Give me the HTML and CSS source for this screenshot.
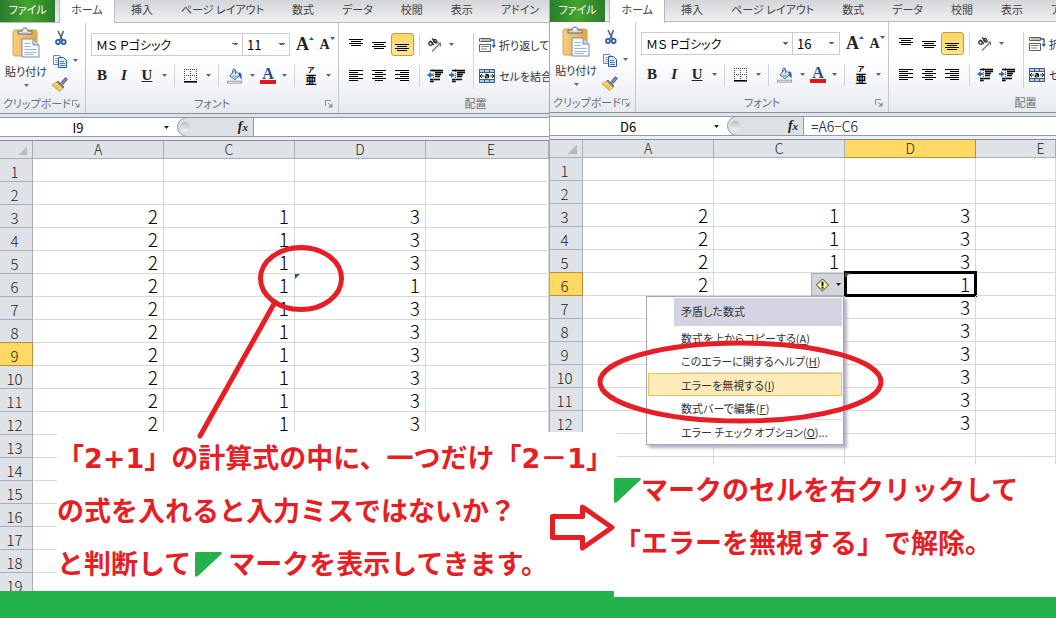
FILE: index.html
```html
<!DOCTYPE html>
<html lang="ja">
<head>
<meta charset="utf-8">
<title>エラーを無視する</title>
<link rel="stylesheet" href="styles.css">
</head>
<body>
<svg class="sprite" aria-hidden="true">
  <defs>
    <linearGradient id="gold" x1="0" y1="0" x2="1" y2="0"><stop offset="0" stop-color="#f6cf7e"/><stop offset="1" stop-color="#e5a545"/></linearGradient>
  </defs>
  <symbol id="paste" viewBox="0 0 28 31">
    <rect x="1" y="3" width="24" height="26" rx="2" fill="url(#gold)" stroke="#d9a04a"/>
    <path d="M6 7V4h4c0-4 6-4 6 0h4v3z" fill="#d5d9de" stroke="#666d75"/><circle cx="13" cy="3.500" r="1.300" fill="#fff"/>
    <path d="M10 12h11l6 6v12H10z" fill="#f8fafd" stroke="#7d8ea8"/><path d="M21 12v6h6" fill="#c9d4e4" stroke="#7d8ea8"/>
    <path d="M12.500 16.500h6M12.500 19.500h6M12.500 22.500h12M12.500 25.500h12M12.500 27.500h9" stroke="#9fb2d0"/>
  </symbol>
  <symbol id="cut" viewBox="0 0 12 16">
    <path d="M3 1l4.500 9M8.500 1L5 10" stroke="#53627a" stroke-width="1.600" fill="none"/>
    <ellipse cx="3" cy="12" rx="2" ry="2.200" fill="#e4edf9" stroke="#285cae" stroke-width="1.700"/><ellipse cx="8.700" cy="12" rx="2" ry="2.200" fill="#e4edf9" stroke="#285cae" stroke-width="1.700"/>
  </symbol>
  <symbol id="copy" viewBox="0 0 16 14">
    <path d="M1.500 1.500h6l2 2v7h-8z" fill="#fff" stroke="#5f88c2"/><path d="M3 4.500h4M3 6.500h4M3 8.500h4" stroke="#7ea4d8"/>
    <path d="M6.500 3.500h5l3 3v7h-8z" fill="#dfeafa" stroke="#30599b"/><path d="M8 7.500h4M8 9.500h5M8 11.500h5" stroke="#4a7cc4"/>
  </symbol>
  <symbol id="brush" viewBox="0 0 16 15">
    <path d="M9 6l4.500-5 2 2L11 8z" fill="#8184bd" stroke="#45466f" stroke-width=".8"/>
    <path d="M6 4.500l6 6-1.500 1.500-6-6z" fill="#8a8478" stroke="#4d4a45" stroke-width=".7"/>
    <path d="M4.500 5.500l6.500 6.500-3.500 3L0 8.500z" fill="#f6dd7c" stroke="#b58a2a" stroke-width=".8"/><path d="M4 8.500l4.500 4M2.500 8.500l5 5" stroke="#d7a93c" stroke-width=".8"/>
  </symbol>
  <symbol id="caret" viewBox="0 0 5 3"><path d="M0 0h5L2.500 3z" fill="currentColor"/></symbol>
  <symbol id="launch" viewBox="0 0 8 8"><path d="M.500 6V.500H6" fill="none" stroke="#8a8f96"/><path d="M3 3l3 3" stroke="#8a8f96"/><path d="M7.500 3v4.500H3z" fill="#8a8f96"/></symbol>
  <symbol id="borders" viewBox="0 0 14 14"><path d="M.500 0v12M6.500 0v12M12.500 0v12M0 .500h13M0 6.500h13" stroke="#444" stroke-dasharray="1 1"/><path d="M0 12.800h13" stroke="#000" stroke-width="1.600"/></symbol>
  <symbol id="bucket" viewBox="0 0 17 16">
    <path d="M8 2l6 5-5.500 5L3 8z" fill="#dfe9f5" stroke="#40628f"/><path d="M4 7.500h9L8.500 11z" fill="#9cbbe0"/><path d="M6 5V2c0-2 3-2 3 0v4" fill="none" stroke="#40628f"/>
    <path d="M12.500 4c3 0 3.500 3 3 8-1-2-3-3-3-5z" fill="#2c62b4"/><rect x=".500" y="13.500" width="15" height="2" fill="#fff" stroke="#8e949b"/>
  </symbol>
  <symbol id="top" viewBox="0 0 15 14"><path d="M0 1.500h14M2 3.500h10M0 5.500h14M2 7.500h10" stroke="#000"/></symbol>
  <symbol id="mid" viewBox="0 0 15 14"><path d="M0 4.500h14M2 6.500h10M0 8.500h14M2 10.500h10" stroke="#000"/></symbol>
  <symbol id="bot" viewBox="0 0 15 14"><path d="M0 6.500h14M2 8.500h10M0 10.500h14M2 12.500h10" stroke="#000"/></symbol>
  <symbol id="left" viewBox="0 0 15 14"><path d="M0 1.500h14M0 3.500h9M0 5.500h14M0 7.500h9M0 9.500h14M0 11.500h9" stroke="#000"/></symbol>
  <symbol id="center" viewBox="0 0 15 14"><path d="M0 1.500h14M3 3.500h8M0 5.500h14M3 7.500h8M0 9.500h14M3 11.500h8" stroke="#000"/></symbol>
  <symbol id="right" viewBox="0 0 15 14"><path d="M0 1.500h14M5 3.500h9M0 5.500h14M5 7.500h9M0 9.500h14M5 11.500h9" stroke="#000"/></symbol>
  <symbol id="outdent" viewBox="0 0 16 14"><path d="M3 1.500h13M8 3.500h8M8 5.500h6M8 7.500h5M3 10.500h10M3 12.500h4" stroke="#000" stroke-width="1.300"/><path d="M6.500 0v14" stroke="#555" stroke-dasharray="1 1"/><path d="M0 6l4-3v2h2v2H4v2z" fill="#2f6fca"/></symbol>
  <symbol id="indent" viewBox="0 0 16 14"><path d="M3 1.500h13M8 3.500h8M8 5.500h6M8 7.500h5M3 10.500h10M3 12.500h4" stroke="#000" stroke-width="1.300"/><path d="M6.500 0v14" stroke="#555" stroke-dasharray="1 1"/><path d="M6 6L2 3v2H0v2h2v2z" fill="#2f6fca"/></symbol>
  <symbol id="orient" viewBox="0 0 16 15"><g fill="none" stroke="#333" stroke-width="1.300"><ellipse cx="3.600" cy="6" rx="1.700" ry="2" transform="rotate(-45 3.600 6)"/><path d="M3 3.500l4 4"/><path d="M5 1l4.500 4.500"/><ellipse cx="8.300" cy="3.700" rx="1.500" ry="2" transform="rotate(-45 8.300 3.700)"/></g><path d="M5 14l8-8M13.500 9V5.500H10" fill="none" stroke="#777" stroke-width="1.200"/></symbol>
  <symbol id="wrap" viewBox="0 0 17 16"><path d="M.500 1.500h11v3H.500zM.500 7.500h11v7H.500z" fill="#fff" stroke="#4d6482"/><path d="M2 3h9M2 9.500h8M2 12h6" stroke="#a3763f"/><path d="M12 3h3v6" fill="none" stroke="#2c5da5" stroke-width="1.300"/><path d="M12.500 8h4.500l-2.200 3z" fill="#2c5da5"/></symbol>
  <symbol id="merge" viewBox="0 0 17 16"><rect x=".500" y="1.500" width="15" height="13" fill="#b7cbe5" stroke="#3f5d87"/><path d="M1 4.500h15M1 11.500h15M5.500 1v3M10.500 1v3M5.500 12v3M10.500 12v3" stroke="#3f5d87"/><path d="M1 5h14v6H1z" fill="#fff"/><path d="M1 8h4M11 8h4M3 6L1 8l2 2M13 6l2 2-2 2" fill="none" stroke="#222"/><path d="M6.500 7c1-1 3-.500 3 .500V10M9.500 8c-4-.500-4 2-2 2 1 0 2-.500 2-1.500" fill="none" stroke="#111" stroke-width="1.200"/></symbol>
  <symbol id="warn" viewBox="0 0 15 15"><path d="M7.500 1l6.500 6.500-6.500 6.500L1 7.500z" fill="#fff79a" stroke="#2a2a2a"/><path d="M7.500 4v4.500M7.500 9.500v2" stroke="#000" stroke-width="2"/></symbol>
  <symbol id="flag" viewBox="0 0 27 25"><path d="M1 0h25c1 0 1 1 .500 2L3 24c-1 1-3 1-3-.500V1z" fill="#24b24c"/></symbol>
</svg>

<main class="page">
  <div class="stage">
    <section class="pane" aria-label="エラー表示">
      <nav class="tabs">
        <button class="tab file">ファイル</button><button class="tab home">ホーム</button><button class="tab">挿入</button><button class="tab">ページ レイアウト</button><button class="tab">数式</button><button class="tab">データ</button><button class="tab">校閲</button><button class="tab">表示</button><button class="tab">アドイン</button>
      </nav>
      <div class="ribbon">
        <div class="group clip">
          <div class="tools">
            <button class="paste"><svg class="i-paste"><use href="#paste"/></svg><span>貼り付け</span><svg class="caret"><use href="#caret"/></svg></button>
            <div class="stack">
              <button class="small" aria-label="切り取り"><svg class="i-cut"><use href="#cut"/></svg></button>
              <button class="small" aria-label="コピー"><svg class="i-copy"><use href="#copy"/></svg><svg class="caret"><use href="#caret"/></svg></button>
              <button class="small" aria-label="書式のコピー"><svg class="i-16"><use href="#brush"/></svg></button>
            </div>
          </div>
          <div class="title">クリップボード<svg class="launch"><use href="#launch"/></svg></div>
        </div>
        <div class="group font">
          <div class="tools rows">
            <div class="row">
              <select class="face" aria-label="フォント"><option>ＭＳ Ｐゴシック</option></select><select class="size" aria-label="サイズ"><option>11</option></select>
              <button class="b22 grow">A<svg class="nudge"><path d="M0 3h5L2.500 0z"/></svg></button><button class="b22 shrink">A<svg class="nudge"><path d="M0 0h5L2.500 3z"/></svg></button>
            </div>
            <div class="row">
              <button class="b22 bold">B</button><button class="b22 ital">I</button><button class="b24 under">U</button><button class="arr" aria-label="下線の種類"><svg class="caret"><use href="#caret"/></svg></button><i class="sep"></i>
              <button class="b24" aria-label="罫線"><svg class="i-14"><use href="#borders"/></svg></button><button class="arr" aria-label="罫線の種類"><svg class="caret"><use href="#caret"/></svg></button><i class="sep"></i>
              <button class="b24" aria-label="塗りつぶし"><svg class="i-16"><use href="#bucket"/></svg></button><button class="arr" aria-label="塗りつぶしの色"><svg class="caret"><use href="#caret"/></svg></button>
              <button class="b22"><span class="color">A</span></button><button class="arr" aria-label="文字の色"><svg class="caret"><use href="#caret"/></svg></button><i class="sep"></i>
              <button class="b24 ruby"><span>ア</span><span>亜</span></button><button class="arr" aria-label="ふりがな"><svg class="caret"><use href="#caret"/></svg></button>
            </div>
          </div>
          <div class="title">フォント<svg class="launch"><use href="#launch"/></svg></div>
        </div>
        <div class="group align">
          <div class="tools">
            <div class="rows">
              <div class="row">
                <button class="b23" aria-label="上揃え"><svg class="i-15"><use href="#top"/></svg></button><button class="b23" aria-label="上下中央揃え"><svg class="i-15"><use href="#mid"/></svg></button><button class="b23 on" aria-label="下揃え"><svg class="i-15"><use href="#bot"/></svg></button><i class="sep"></i>
                <button class="b22" aria-label="方向"><svg class="i-16"><use href="#orient"/></svg></button><button class="arr" aria-label="方向の種類"><svg class="caret"><use href="#caret"/></svg></button>
              </div>
              <div class="row">
                <button class="b23" aria-label="左揃え"><svg class="i-15"><use href="#left"/></svg></button><button class="b23" aria-label="中央揃え"><svg class="i-15"><use href="#center"/></svg></button><button class="b23" aria-label="右揃え"><svg class="i-15"><use href="#right"/></svg></button><i class="sep"></i>
                <button class="b22" aria-label="インデントを減らす"><svg class="i-16"><use href="#outdent"/></svg></button><button class="b22" aria-label="インデントを増やす"><svg class="i-16"><use href="#indent"/></svg></button>
              </div>
            </div>
            <i class="sep tall"></i>
            <div class="rows">
              <button class="wide"><svg class="i-17"><use href="#wrap"/></svg>折り返して</button>
              <button class="wide"><svg class="i-17"><use href="#merge"/></svg>セルを結合</button>
            </div>
          </div>
          <div class="title">配置</div>
        </div>
      </div>
      <div class="formula">
        <input class="name" aria-label="名前ボックス" value="I9"><svg class="caret dark"><use href="#caret"/></svg>
        <div class="fx"><i class="knob"></i><span><b>f</b>x</span></div>
        <input class="expr" aria-label="数式バー" value="">
      </div>
      <table class="sheet">
        <colgroup><col class="c-num"><col class="c-cell"><col class="c-cell"><col class="c-cell"><col></colgroup>
        <thead><tr><th class="corner"></th><th>A</th><th>C</th><th>D</th><th class="edge">E</th></tr></thead>
        <tbody>
          <tr><th>1</th><td></td><td></td><td></td><td></td></tr>
          <tr><th>2</th><td></td><td></td><td></td><td></td></tr>
          <tr><th>3</th><td>2</td><td>1</td><td>3</td><td></td></tr>
          <tr><th>4</th><td>2</td><td>1</td><td>3</td><td></td></tr>
          <tr><th>5</th><td>2</td><td>1</td><td>3</td><td></td></tr>
          <tr><th>6</th><td>2</td><td>1</td><td class="flagged">1</td><td></td></tr>
          <tr><th>7</th><td>2</td><td>1</td><td>3</td><td></td></tr>
          <tr><th>8</th><td>2</td><td>1</td><td>3</td><td></td></tr>
          <tr><th class="hot">9</th><td>2</td><td>1</td><td>3</td><td></td></tr>
          <tr><th>10</th><td>2</td><td>1</td><td>3</td><td></td></tr>
          <tr><th>11</th><td>2</td><td>1</td><td>3</td><td></td></tr>
          <tr><th>12</th><td>2</td><td>1</td><td>3</td><td></td></tr>
          <tr><th>13</th><td></td><td></td><td></td><td></td></tr>
          <tr><th>14</th><td></td><td></td><td></td><td></td></tr>
          <tr><th>15</th><td></td><td></td><td></td><td></td></tr>
          <tr><th>16</th><td></td><td></td><td></td><td></td></tr>
          <tr><th>17</th><td></td><td></td><td></td><td></td></tr>
          <tr><th>18</th><td></td><td></td><td></td><td></td></tr>
          <tr class="cut"><th><div>19</div></th><td></td><td></td><td></td><td></td></tr>
        </tbody>
      </table>
    </section>

    <section class="pane second" aria-label="エラーの解除">
      <nav class="tabs">
        <button class="tab file">ファイル</button><button class="tab home">ホーム</button><button class="tab">挿入</button><button class="tab">ページ レイアウト</button><button class="tab">数式</button><button class="tab">データ</button><button class="tab">校閲</button><button class="tab">表示</button><button class="tab">アドイン</button>
      </nav>
      <div class="ribbon">
        <div class="group clip">
          <div class="tools">
            <button class="paste"><svg class="i-paste"><use href="#paste"/></svg><span>貼り付け</span><svg class="caret"><use href="#caret"/></svg></button>
            <div class="stack">
              <button class="small" aria-label="切り取り"><svg class="i-cut"><use href="#cut"/></svg></button>
              <button class="small" aria-label="コピー"><svg class="i-copy"><use href="#copy"/></svg><svg class="caret"><use href="#caret"/></svg></button>
              <button class="small" aria-label="書式のコピー"><svg class="i-16"><use href="#brush"/></svg></button>
            </div>
          </div>
          <div class="title">クリップボード<svg class="launch"><use href="#launch"/></svg></div>
        </div>
        <div class="group font">
          <div class="tools rows">
            <div class="row">
              <select class="face" aria-label="フォント"><option>ＭＳ Ｐゴシック</option></select><select class="size" aria-label="サイズ"><option>16</option></select>
              <button class="b22 grow">A<svg class="nudge"><path d="M0 3h5L2.500 0z"/></svg></button><button class="b22 shrink">A<svg class="nudge"><path d="M0 0h5L2.500 3z"/></svg></button>
            </div>
            <div class="row">
              <button class="b22 bold">B</button><button class="b22 ital">I</button><button class="b24 under">U</button><button class="arr" aria-label="下線の種類"><svg class="caret"><use href="#caret"/></svg></button><i class="sep"></i>
              <button class="b24" aria-label="罫線"><svg class="i-14"><use href="#borders"/></svg></button><button class="arr" aria-label="罫線の種類"><svg class="caret"><use href="#caret"/></svg></button><i class="sep"></i>
              <button class="b24" aria-label="塗りつぶし"><svg class="i-16"><use href="#bucket"/></svg></button><button class="arr" aria-label="塗りつぶしの色"><svg class="caret"><use href="#caret"/></svg></button>
              <button class="b22"><span class="color">A</span></button><button class="arr" aria-label="文字の色"><svg class="caret"><use href="#caret"/></svg></button><i class="sep"></i>
              <button class="b24 ruby"><span>ア</span><span>亜</span></button><button class="arr" aria-label="ふりがな"><svg class="caret"><use href="#caret"/></svg></button>
            </div>
          </div>
          <div class="title">フォント<svg class="launch"><use href="#launch"/></svg></div>
        </div>
        <div class="group align">
          <div class="tools">
            <div class="rows">
              <div class="row">
                <button class="b23" aria-label="上揃え"><svg class="i-15"><use href="#top"/></svg></button><button class="b23" aria-label="上下中央揃え"><svg class="i-15"><use href="#mid"/></svg></button><button class="b23 on" aria-label="下揃え"><svg class="i-15"><use href="#bot"/></svg></button><i class="sep"></i>
                <button class="b22" aria-label="方向"><svg class="i-16"><use href="#orient"/></svg></button><button class="arr" aria-label="方向の種類"><svg class="caret"><use href="#caret"/></svg></button>
              </div>
              <div class="row">
                <button class="b23" aria-label="左揃え"><svg class="i-15"><use href="#left"/></svg></button><button class="b23" aria-label="中央揃え"><svg class="i-15"><use href="#center"/></svg></button><button class="b23" aria-label="右揃え"><svg class="i-15"><use href="#right"/></svg></button><i class="sep"></i>
                <button class="b22" aria-label="インデントを減らす"><svg class="i-16"><use href="#outdent"/></svg></button><button class="b22" aria-label="インデントを増やす"><svg class="i-16"><use href="#indent"/></svg></button>
              </div>
            </div>
            <i class="sep tall"></i>
            <div class="rows">
              <button class="wide"><svg class="i-17"><use href="#wrap"/></svg>折り返して</button>
              <button class="wide"><svg class="i-17"><use href="#merge"/></svg>セルを結合</button>
            </div>
          </div>
          <div class="title">配置</div>
        </div>
      </div>
      <div class="formula">
        <input class="name" aria-label="名前ボックス" value="D6"><svg class="caret dark"><use href="#caret"/></svg>
        <div class="fx"><i class="knob"></i><span><b>f</b>x</span></div>
        <input class="expr" aria-label="数式バー" value="=A6−C6">
      </div>
      <table class="sheet">
        <colgroup><col class="c-num"><col class="c-cell"><col class="c-cell"><col class="c-cell"><col></colgroup>
        <thead><tr><th class="corner"></th><th>A</th><th>C</th><th class="hot">D</th><th class="clipped">E</th></tr></thead>
        <tbody>
          <tr><th>1</th><td></td><td></td><td></td><td></td></tr>
          <tr><th>2</th><td></td><td></td><td></td><td></td></tr>
          <tr><th>3</th><td>2</td><td>1</td><td>3</td><td></td></tr>
          <tr><th>4</th><td>2</td><td>1</td><td>3</td><td></td></tr>
          <tr><th>5</th><td>2</td><td>1</td><td>3</td><td></td></tr>
          <tr><th class="hot">6</th><td>2</td>
            <td><button class="smart" aria-label="エラー チェック"><svg class="i-15"><use href="#warn"/></svg><svg class="caret dark"><use href="#caret"/></svg></button>
              <div class="menu">
                <div class="head">矛盾した数式</div>
                <button>数式を上からコピーする(<u>A</u>)</button>
                <button>このエラーに関するヘルプ(<u>H</u>)</button>
                <hr>
                <button class="pick">エラーを無視する(<u>I</u>)</button>
                <button>数式バーで編集(<u>F</u>)</button>
                <hr>
                <button>エラー チェック オプション(<u>O</u>)...</button>
              </div></td>
            <td class="flagged active">1</td><td></td></tr>
          <tr><th>7</th><td></td><td></td><td>3</td><td></td></tr>
          <tr><th>8</th><td></td><td></td><td>3</td><td></td></tr>
          <tr><th>9</th><td></td><td></td><td>3</td><td></td></tr>
          <tr><th>10</th><td></td><td></td><td>3</td><td></td></tr>
          <tr><th>11</th><td></td><td></td><td>3</td><td></td></tr>
          <tr><th>12</th><td></td><td></td><td>3</td><td></td></tr>
          <tr><th></th><td></td><td></td><td></td><td></td></tr>
          <tr><th></th><td></td><td></td><td></td><td></td></tr>
        </tbody>
      </table>
    </section>

    <div class="note one">
      <p>「2+1」の計算式の中に、一つだけ「2－1」</p>
      <p>の式を入れると入力ミスではないか？</p>
      <p>と判断して<svg class="flag gap"><use href="#flag"/></svg>マークを表示してきます。</p>
    </div>
    <div class="note two">
      <p><svg class="flag"><use href="#flag"/></svg>マークのセルを右クリックして</p>
      <p>「エラーを無視する」で解除。</p>
    </div>
    <svg class="marks" viewBox="0 0 1056 618" aria-hidden="true">
      <g fill="none" stroke="#e61e25" stroke-width="5" stroke-linecap="round" stroke-linejoin="round">
        <ellipse cx="301" cy="278.500" rx="40.500" ry="31"/><path d="M275 302L200 436"/>
        <ellipse cx="740.500" cy="382" rx="140.500" ry="39"/>
        <path d="M552.500 516.500H582.500V507L612 527.500L582.500 548V537.500H552.500Z"/>
      </g>
    </svg>
  </div>
</main>
</body>
</html>
```
FILE: styles.css
```css
* { box-sizing: border-box; }
body {
  margin: 0;
  color: #333;
  font-family: "Noto Sans CJK JP", sans-serif;
  font-size: 12px;
  font-feature-settings: "palt";
}
button, input, select {
  margin: 0;
  padding: 0;
  border: 0;
  background: none;
  color: inherit;
  font: inherit;
  font-feature-settings: inherit;
}
svg { display: block; flex: none; }
.sprite { position: absolute; width: 0; height: 0; }
.page { min-height: 100vh; background: #24b24c; overflow: hidden; }
.stage { position: relative; display: grid; grid-template-columns: 52% 1fr; align-items: start; }
.pane { min-width: 0; overflow: hidden; background: #fff; }
.second { border-left: 1px solid #a3abb5; }

/* tabs */
.tabs {
  display: flex;
  height: 23px;
  border-bottom: 1px solid #b5bac1;
  background: linear-gradient(#d3d5d8, #eef0f2);
}
.second .tabs { height: 22px; }
.tab { flex: none; height: 22px; padding: 0 14px 3px; font-size: 11px; line-height: 19px; color: #444; white-space: nowrap; }
.file { width: 55px; padding: 0 0 3px; background: linear-gradient(90deg, #2a7d2b, #43a32f 50%, #2a7d2b); color: #fff; }
.home { width: 56px; height: 23px; margin: 0 2px 0 4px; padding: 0 0 4px; border: solid #b5bac1; border-width: 0 1px; background: #fff; }

/* ribbon */
.ribbon { display: flex; height: 91px; border-bottom: 1px solid #8b929b; background: linear-gradient(#fff 40%, #e6eaef); }
.group { flex: none; display: flex; flex-direction: column; border-right: 1px solid #c3c8cf; }
.clip { width: 86px; }
.font { width: 253px; }
.align { width: 274px; }
.tools { display: flex; height: 72px; }
.title { position: relative; height: 18px; text-align: center; font-size: 11px; line-height: 17px; color: #6a7078; }
.clip .title { padding-left: 3px; text-align: left; }
.launch { position: absolute; right: 5px; top: 5px; width: 8px; height: 8px; }
.caret { width: 5px; height: 3px; color: #666; }
.dark { color: #222; }
.paste { display: flex; flex-direction: column; align-items: center; width: 52px; padding-top: 4px; line-height: 18px; }
.paste span { margin: 4px 0; font-size: 11px; white-space: nowrap; }
.i-paste { width: 28px; height: 31px; }
.stack { padding-top: 3px; }
.small { display: flex; align-items: center; gap: 5px; width: 30px; height: 23px; }
.i-cut { width: 12px; height: 16px; margin-left: 3px; }
.i-copy { width: 16px; height: 14px; }
.i-14 { width: 14px; height: 14px; }
.i-15 { width: 15px; height: 14px; }
.i-16 { width: 16px; height: 16px; }
.i-17 { width: 17px; height: 16px; }
.rows { display: flex; flex-direction: column; gap: 8px; padding-top: 10px; }
.align .tools { padding-left: 6px; }
.font .tools { padding-left: 5px; }
.row { display: flex; align-items: center; height: 23px; }
.row button { flex: none; display: flex; align-items: center; justify-content: center; height: 23px; }
.row .b22 { width: 22px; }
.row .b23 { width: 23px; }
.row .b24 { width: 24px; }
.row .arr { width: 10px; }
.on { border: 1px solid #c59b3a; border-radius: 3px; background: linear-gradient(#fbd567, #ffe88f); }
.sep { flex: none; width: 10px; height: 22px; background: linear-gradient(#d0d4d9, #d0d4d9) center / 1px 100% no-repeat; }
.tall { height: 56px; margin-top: 10px; }
.face, .size {
  height: 23px;
  padding-left: 4px;
  border: 1px solid #c9ccd1;
  appearance: none;
  color: #000;
  background: conic-gradient(from -45deg at 50% 100%, #666 90deg, transparent 0) right 4px center / 6px 3px no-repeat, #fff;
  background: linear-gradient(to bottom left, #666 50%, transparent 50%) right 7px center / 3px 3px no-repeat,
    linear-gradient(to bottom right, #666 50%, transparent 50%) right 4px center / 3px 3px no-repeat, #fff;
}
.face { width: 152px; }
.size { width: 47px; margin: 0 4px 0 0; border-left: 0; font-size: 13px; }
.grow, .shrink, .bold, .ital, .under, .color { font-family: "Liberation Serif", serif; font-weight: bold; color: #222; }
.grow { font-size: 18px; }
.shrink { font-size: 14px; }
.nudge { width: 5px; height: 3px; align-self: flex-start; margin-top: 4px; fill: #2f5f9f; }
.bold, .ital, .under { font-size: 15px; }
.ital { font-style: italic; }
.under { text-decoration: underline; }
.color { width: 16px; height: 17px; border-bottom: 4px solid #e8141c; color: #2c4a80; font-size: 16px; line-height: 13px; }
.row .ruby { flex-direction: column; color: #000; font-size: 11px; font-weight: bold; line-height: 12px; }
.ruby span:first-child { font-size: 7px; line-height: 7px; }
.wide { display: flex; align-items: center; gap: 3px; height: 23px; padding-left: 1px; font-size: 11px; white-space: nowrap; }

/* formula bar */
.formula { display: flex; align-items: center; height: 26px; border-bottom: 3px solid #eef0f3; border-top: 3px solid #dfe3e8; box-shadow: inset 0 1px #949ba5, inset 0 -1px #949ba5; color: #000; }
.name { width: 164px; padding-right: 8px; font-size: 13px; text-align: center; }
.fx { display: flex; align-items: center; justify-content: space-between; width: 77px; height: 20px; margin-left: 8px; padding: 0 5px 0 2px; border: 1px solid #949ba5; border-radius: 10px 0 0 10px; background: #dde1e6; font: italic bold 11px "Liberation Serif", serif; color: #222; }
.fx b { font-size: 14px; }
.knob { width: 10px; height: 10px; border-radius: 5px; background: linear-gradient(#b9bdc3, #f4f5f7); }
.expr { flex: 1; min-width: 0; padding-left: 7px; font-size: 14px; font-weight: 300; }

/* sheet */
.sheet { width: 100%; table-layout: fixed; border-spacing: 0; border-collapse: separate; border-top: 1px solid #858c96; }
.c-num { width: 33px; }
.c-cell { width: 131px; }
.sheet th, .sheet td { height: 23px; padding: 0; border: solid #d6d8da; border-width: 0 1px 1px 0; line-height: 18px; }
.sheet th { border-color: #a9afb8; background: #dfe2e7; color: #222; font-size: 15px; font-weight: 300; }
.sheet tbody th { padding: 4px 3px 0 0; }
.sheet thead th { height: 18px; padding: 0; font-size: 14px; line-height: 17px; }
.sheet thead .edge { padding-left: 8px; }
.sheet thead .clipped { padding-left: 50px; }
.sheet td { position: relative; padding-right: 5px; color: #000; font-size: 19px; font-weight: 300; text-align: right; }
.corner { background: linear-gradient(135deg, transparent 50%, #b7bcc4 50%) right 5px bottom 3px / 9px 9px no-repeat, #dfe2e7 !important; }
.sheet .hot { border-color: #c08f35; background: #ffd963; }
.sheet tbody .hot { box-shadow: 0 -1px #c08f35; }
.sheet .cut th, .sheet .cut td { height: 18px; padding: 0 3px 0 0; border-bottom: 0; }
.cut div { height: 18px; padding-top: 4px; overflow: hidden; }
.flagged::before { content: ""; position: absolute; z-index: 1; left: 0; top: 0; border-top: 5px solid #16791c; border-right: 5px solid transparent; }
.active::after { content: ""; position: absolute; inset: -2px -2px -2px -1px; border: 3px solid #000; }
.smart { position: absolute; right: -1px; top: 0; display: flex; align-items: center; gap: 6px; width: 34px; height: 23px; padding-left: 3px; border: 1px solid #a9afb8; background: #d2d5d9; }

/* menu */
.menu { position: absolute; z-index: 1; right: 0; top: 23px; width: 198px; padding: 1px; border: 1px solid #a5a8b0; background: #fff; box-shadow: 3px 3px 3px #b5b0c8; color: #333; font-size: 11px; font-weight: 400; text-align: left; }
.menu .head { height: 28px; margin: 0 0 0 26px; padding-left: 7px; background: #d4d3e1; line-height: 27px; }
.menu button { display: block; width: 100%; height: 23px; padding-left: 33px; line-height: 20px; text-align: left; white-space: nowrap; }
.menu hr { height: 1px; margin: 0 0 0 33px; border: 0; background: #d8dade; }
.menu .pick { border: 1px solid #e8c554; padding-left: 32px; background: #fdebb9; }

/* annotations */
.note { position: absolute; background: #fff; color: #e61e25; font: bold 27px/53px "DejaVu Sans", "Noto Sans CJK JP", sans-serif; font-feature-settings: normal; white-space: nowrap; }
.note p { display: flex; align-items: center; margin: 0; }
.one { left: 57px; top: 432px; width: 560px; }
.two { left: 614px; right: 0; top: 464px; padding-bottom: 27px; }
.flag { width: 27px; height: 25px; }
.gap { margin: 0 6px 0 4px; }
.marks { position: absolute; z-index: 2; left: 0; top: 0; width: 1056px; height: 618px; pointer-events: none; }
```
